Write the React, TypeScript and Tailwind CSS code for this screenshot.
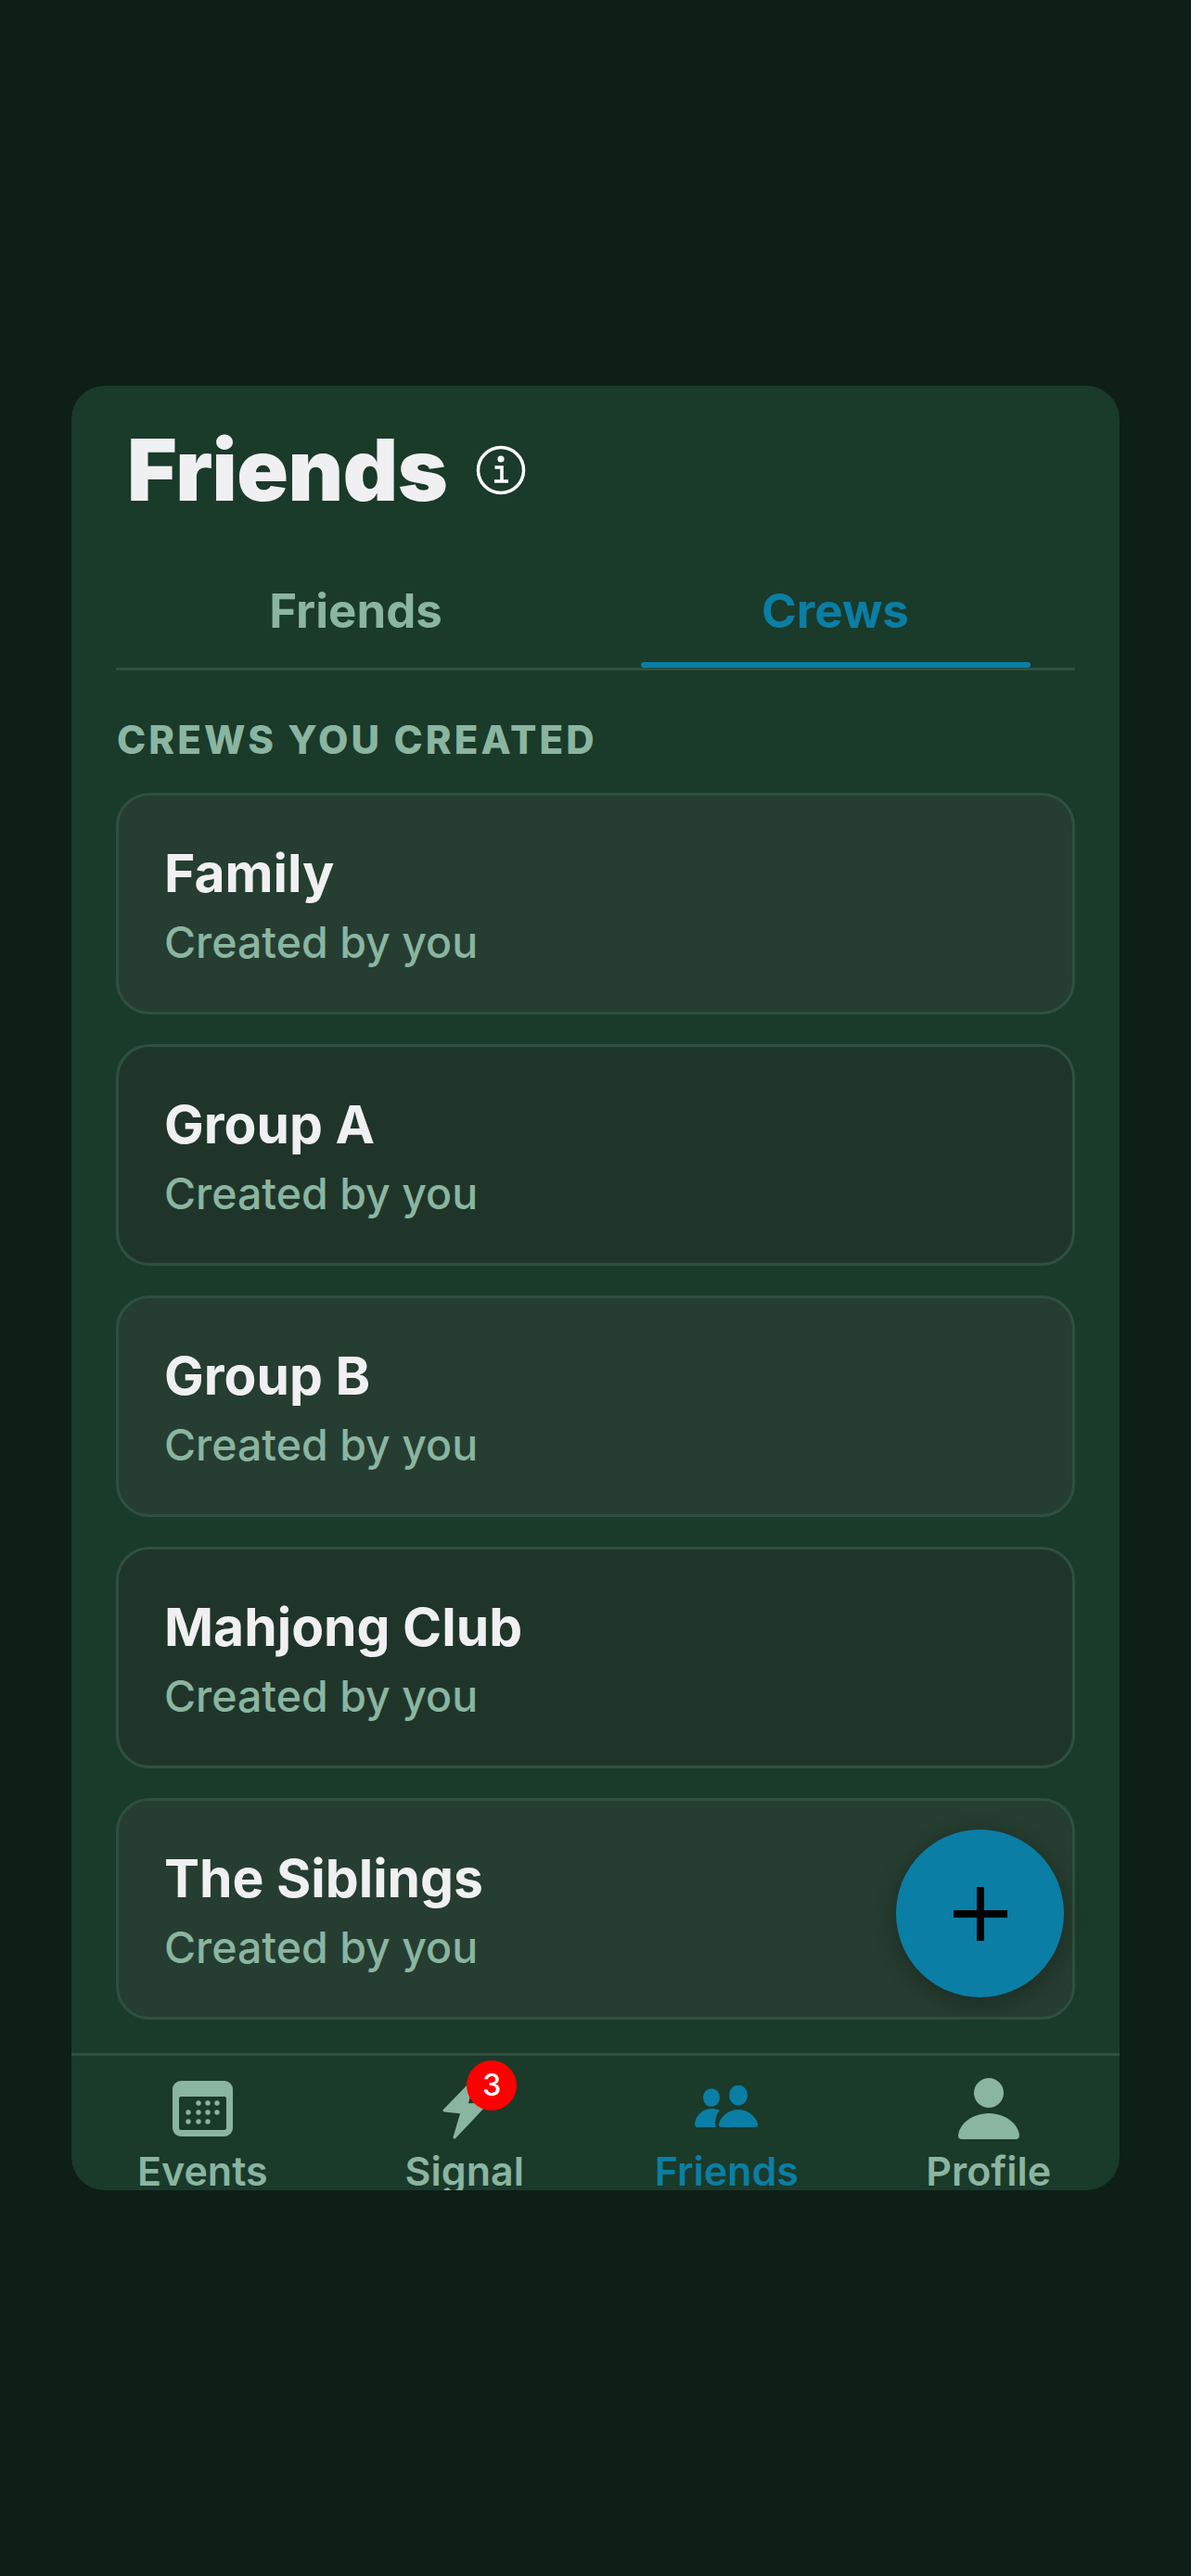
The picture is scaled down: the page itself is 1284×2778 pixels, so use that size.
const crews = ["Family", "Group A", "Group B", "Mahjong Club", "The Siblings"];

function InfoIcon() {
  return (
    <svg width="54" height="54" viewBox="0 0 54 54" fill="none" className="ml-[31px] text-white">
      <circle cx="27" cy="27" r="24.5" stroke="currentColor" strokeWidth="3.5" />
      <circle cx="27" cy="15" r="3.6" fill="currentColor" />
      <path d="M20.5 24h7.500v15M20 39h15" stroke="currentColor" strokeWidth="3.6" />
    </svg>
  );
}

function CalendarIcon() {
  const dots = [
    [28, 24], [38, 24], [48, 24],
    [17, 34], [28, 34], [38, 34], [48, 34],
    [17, 44], [28, 44], [38, 44],
  ];
  return (
    <svg width="65" height="60" viewBox="0 0 65 60" fill="currentColor">
      <path
        fillRule="evenodd"
        d="M9 0h47a9 9 0 0 1 9 9v42a9 9 0 0 1-9 9H9a9 9 0 0 1-9-9V9a9 9 0 0 1 9-9ZM9 17a2 2 0 0 0-2 2v32a2 2 0 0 0 2 2h47a2 2 0 0 0 2-2V19a2 2 0 0 0-2-2Z"
      />
      {dots.map(([cx, cy]) => (
        <circle key={`${cx}-${cy}`} cx={cx} cy={cy} r="2.7" />
      ))}
    </svg>
  );
}

function BoltIcon() {
  return (
    <svg width="55" height="66" viewBox="0 0 55 66" fill="currentColor" stroke="currentColor" strokeWidth="3" strokeLinejoin="round">
      <path d="M6 35 37 3l-7 25.500 20 .5-33 35 8-27Z" />
    </svg>
  );
}

function FriendsIcon() {
  return (
    <svg width="68" height="46" viewBox="0 0 68 46" fill="currentColor" className="mb-[5px]">
      <ellipse cx="18" cy="13" rx="9" ry="9.800" />
      <ellipse cx="47" cy="10.500" rx="10" ry="11" />
      <path d="M0 41C1 32 9 25 18 25c3 0 6 .6 9 2-3 3-5 8-5 14l1 4H3c-2 0-3-2-3-4Z" />
      <path d="M29 45c-2.500 0-3.500-1.500-3-3.500C28 33 37 26 47 26s19 7 21 15.500c.5 2-.5 3.500-3 3.500H29Z" />
    </svg>
  );
}

function ProfileIcon() {
  return (
    <svg width="66" height="66" viewBox="0 0 66 66" fill="currentColor">
      <ellipse cx="33" cy="16" rx="16" ry="16" />
      <path d="M4 66c-3 0-4-2-4-4C1 49 16 38 33 38s32 11 33 24c0 2-1 4-4 4H4Z" />
    </svg>
  );
}

function NavItem({ label, active, children }: { label: string; active?: boolean; children: React.ReactNode }) {
  return (
    <div className={`flex flex-col items-center ${active ? "text-[#0a7ea4]" : "text-[#8ab5a0]"}`}>
      <div className="flex h-[66px] items-center justify-center">{children}</div>
      <span className="mt-[9px] text-[43px] leading-[50px] font-semibold whitespace-nowrap">{label}</span>
    </div>
  );
}

export default function App() {
  return (
    <div
      className="flex h-[2778px] items-center justify-center bg-[#0d1f17]"
      style={{ fontFamily: "Inter, 'Noto Sans', sans-serif" }}
    >
      <div className="relative flex h-[1946px] w-[1130px] flex-col overflow-hidden rounded-[36px] bg-[#1a3a2a]">
        <div className="flex items-center pl-[60px] pt-[36px]">
          <h1 className="text-[92px] leading-[110px] font-black tracking-[-0.5px] text-[#f0f0f2]">Friends</h1>
          <InfoIcon />
        </div>

        <div className="mx-[48px] mt-[32px] flex h-[129px] border-b-[3px] border-[#2f5040]">
          <div className="flex flex-1 items-start justify-center pt-[36px]">
            <span className="text-[51px] leading-[58px] font-bold text-[#8ab5a0]">Friends</span>
          </div>
          <div className="relative flex flex-1 items-start justify-center pt-[36px]">
            <span className="text-[51px] leading-[58px] font-bold text-[#0a7ea4]">Crews</span>
            <div className="absolute bottom-0 h-[6px] w-[420px] rounded-[3px] bg-[#0a7ea4]" />
          </div>
        </div>

        <div className="mx-[48px] mt-[50px] flex flex-1 flex-col">
          <h2 className="pl-[1px] text-[42px] leading-[50px] font-extrabold tracking-[3.100px] text-[#8ab5a0]">CREWS YOU CREATED</h2>
          <div className="mt-[32px] flex flex-col gap-[32px]">
            {crews.map((name, index) => (
              <div
                key={name}
                className={`h-[239px] rounded-[36px] border-[3px] border-[#2f5040] pl-[49px] pt-[50px] ${
                  index % 2 === 0 ? "bg-[#263d31]" : "bg-[#20352a]"
                }`}
              >
                <p className="text-[57px] leading-[68px] font-bold text-[#f0f0f2]">{name}</p>
                <p className="mt-[11px] text-[46.500px] leading-[58px] font-medium text-[#8ab5a0]">Created by you</p>
              </div>
            ))}
          </div>
        </div>

        <div className="grid h-[148px] shrink-0 grid-cols-4 border-t-[3px] border-[#2f5040] pt-[24px]">
          <NavItem label="Events">
            <CalendarIcon />
          </NavItem>
          <NavItem label="Signal">
            <div className="relative">
              <BoltIcon />
              <div className="absolute left-[30px] top-[-19px] flex h-[54px] w-[54px] items-center justify-center rounded-full bg-[#ff0000] text-[32px] leading-none font-medium text-white">
                3
              </div>
            </div>
          </NavItem>
          <NavItem label="Friends" active>
            <FriendsIcon />
          </NavItem>
          <NavItem label="Profile">
            <ProfileIcon />
          </NavItem>
        </div>

        <div className="absolute left-[889px] top-[1557px] flex h-[181px] w-[181px] items-center justify-center rounded-full bg-[#0a7ea4] shadow-[0_6px_24px_rgba(0,0,0,0.3)]">
          <svg width="58" height="58" viewBox="0 0 58 58" fill="none" stroke="#000" strokeWidth="8">
            <path d="M29 0v58M0 29h58" />
          </svg>
        </div>
      </div>
    </div>
  );
}
